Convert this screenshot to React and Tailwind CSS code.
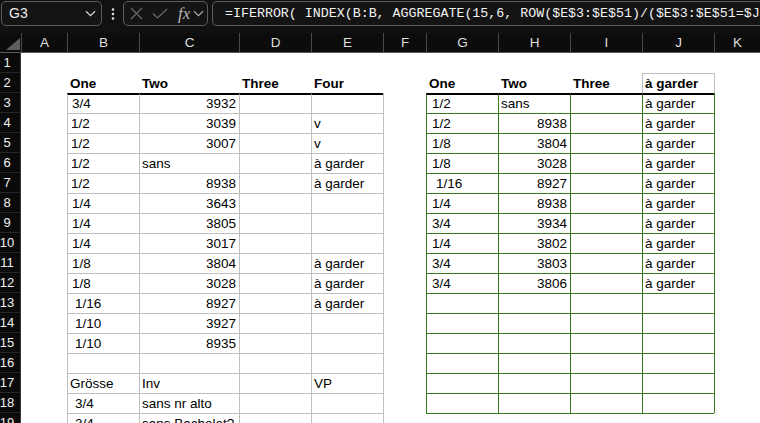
import React from "react";

const GRID =
  "grid grid-cols-[21px_46px_72px_100px_72px_72px_43px_72px_72px_72px_72px_46px]";
const COLS = ["A", "B", "C", "D", "E", "F", "G", "H", "I", "J", "K"];

const NUM = "justify-end pr-[3px]";
const HB = "pl-[3px] font-bold";
const P2 = "pl-[2px]";
const P3 = "pl-[3px]";
const P4 = "pl-[4px]";
const P5 = "pl-[5px]";
const P7 = "pl-[7px]";
const P9 = "pl-[9px]";

const t = (text, c) => ({ text, c });

// data[row][colIndex 1..11]
const data = {
  2: { 2: t("One", HB), 3: t("Two", HB), 4: t("Three", HB), 5: t("Four", HB), 7: t("One", HB), 8: t("Two", HB), 9: t("Three", HB), 10: t("à garder", "pl-[2px] font-bold") },
  3: { 2: t("3/4", P4), 3: t("3932", NUM), 7: t("1/2", P5), 8: t("sans", P2), 10: t("à garder", P2) },
  4: { 2: t("1/2", P3), 3: t("3039", NUM), 5: t("v", P2), 7: t("1/2", P5), 8: t("8938", NUM), 10: t("à garder", P2) },
  5: { 2: t("1/2", P3), 3: t("3007", NUM), 5: t("v", P2), 7: t("1/8", P5), 8: t("3804", NUM), 10: t("à garder", P2) },
  6: { 2: t("1/2", P3), 3: t("sans", P2), 5: t("à garder", P2), 7: t("1/8", P5), 8: t("3028", NUM), 10: t("à garder", P2) },
  7: { 2: t("1/2", P3), 3: t("8938", NUM), 5: t("à garder", P2), 7: t("1/16", P9), 8: t("8927", NUM), 10: t("à garder", P2) },
  8: { 2: t("1/4", P4), 3: t("3643", NUM), 7: t("1/4", P5), 8: t("8938", NUM), 10: t("à garder", P2) },
  9: { 2: t("1/4", P4), 3: t("3805", NUM), 7: t("3/4", P5), 8: t("3934", NUM), 10: t("à garder", P2) },
  10: { 2: t("1/4", P4), 3: t("3017", NUM), 7: t("1/4", P5), 8: t("3802", NUM), 10: t("à garder", P2) },
  11: { 2: t("1/8", P4), 3: t("3804", NUM), 5: t("à garder", P2), 7: t("3/4", P5), 8: t("3803", NUM), 10: t("à garder", P2) },
  12: { 2: t("1/8", P4), 3: t("3028", NUM), 5: t("à garder", P2), 7: t("3/4", P5), 8: t("3806", NUM), 10: t("à garder", P2) },
  13: { 2: t("1/16", P7), 3: t("8927", NUM), 5: t("à garder", P2) },
  14: { 2: t("1/10", P7), 3: t("3927", NUM) },
  15: { 2: t("1/10", P7), 3: t("8935", NUM) },
  16: {},
  17: { 2: t("Grösse", P2), 3: t("Inv", P2), 5: t("VP", P2) },
  18: { 2: t("3/4", P7), 3: t("sans nr alto", P2) },
  19: { 2: t("3/4", P7), 3: t("sans Bachelet?", P2) },
};

function borderFor(r, c) {
  if (r >= 3 && r <= 19 && c >= 2 && c <= 5)
    return r === 3
      ? "border-t-2 border-t-black border-l border-l-[#bfbfbf]"
      : "border-t border-l border-[#bfbfbf]";
  if (r >= 3 && r <= 19 && c === 6) return "border-l border-[#bfbfbf]";
  if (r >= 3 && r <= 18 && c >= 7 && c <= 10)
    return r === 3
      ? "border-t-2 border-t-black border-l border-l-[#3a7a1f]"
      : "border-t border-l border-[#3a7a1f]";
  if (r >= 3 && r <= 18 && c === 11) return "border-l border-[#3a7a1f]";
  if (r === 19 && c >= 7 && c <= 10) return "border-t border-[#3a7a1f]";
  if (r === 2 && c === 10) return "border-t border-l border-[#bfbfbf]";
  if (r === 2 && c === 11) return "border-l border-[#bfbfbf]";
  return "";
}

function Chevron({ color }) {
  return (
    <svg width="11" height="7" viewBox="0 0 11 7">
      <path d="M1 1.2 L5.5 5.6 L10 1.2" stroke={color} strokeWidth="1.2" fill="none" />
    </svg>
  );
}

function Toolbar() {
  return (
    <div className="h-[33px] bg-[#111111] flex items-start pt-[1px] pl-[1px]">
      <div className="w-[101px] h-[25px] shrink-0 rounded-[5px] border border-[#5c5c5c] bg-[#141414] flex items-center justify-between pl-[7px] pr-[5px]">
        <span className="text-[14px] text-[#ececec]">G3</span>
        <Chevron color="#d8d8d8" />
      </div>
      <div className="w-[21px] h-[25px] shrink-0 flex items-center justify-center">
        <svg width="4" height="14" viewBox="0 0 4 14">
          <circle cx="2" cy="2.5" r="1.3" fill="#e0e0e0" />
          <circle cx="2" cy="7" r="1.3" fill="#e0e0e0" />
          <circle cx="2" cy="11.5" r="1.3" fill="#e0e0e0" />
        </svg>
      </div>
      <div className="w-[85px] h-[25px] shrink-0 rounded-[5px] border border-[#5c5c5c] bg-[#141414] flex items-center pl-[6px]">
        <svg width="13" height="13" viewBox="0 0 13 13">
          <path d="M1 1 L12 12 M12 1 L1 12" stroke="#6a6a6a" strokeWidth="1.2" fill="none" />
        </svg>
        <svg width="16" height="11" viewBox="0 0 16 11" className="ml-[9px]">
          <path d="M1 5.5 L5.5 10 L15 1" stroke="#6a6a6a" strokeWidth="1.2" fill="none" />
        </svg>
        <span className="ml-[10px] font-['Liberation_Serif',serif] italic text-[17px] leading-none text-[#b4b4b4]">
          fx
        </span>
        <span className="ml-[3px]">
          <Chevron color="#a8a8a8" />
        </span>
      </div>
      <div className="ml-[4px] flex-1 min-w-0 h-[25px] rounded-l-[5px] border border-r-0 border-[#5c5c5c] bg-[#141414] flex items-center pl-[12px] overflow-hidden">
        <span className="font-['Liberation_Mono',monospace] text-[13.3px] text-[#f2f2f2] whitespace-pre">
          =IFERROR( INDEX(B:B, AGGREGATE(15,6, ROW($E$3:$E$51)/($E$3:$E$51=$J$2), ROWS($1:1))), "")
        </span>
      </div>
    </div>
  );
}

function ColumnHeader() {
  return (
    <div className={`${GRID} h-[20px] bg-[#0c0c0c] border-b border-[#5a5a5a]`}>
      <div className="relative">
        <svg width="16" height="13" viewBox="0 0 16 13" className="absolute left-[5px] top-[5px]">
          <path d="M15 0 L15 12 L1 12 Z" fill="#5e5e5e" />
        </svg>
      </div>
      {COLS.map((c) => (
        <div
          key={c}
          className="border-l border-[#4a4a4a] flex items-center justify-center text-[13.5px] text-[#dedede]"
        >
          {c}
        </div>
      ))}
    </div>
  );
}

function Sheet() {
  const rows = [];
  for (let r = 1; r <= 19; r++) {
    const rowData = data[r] || {};
    rows.push(
      <div key={"h" + r} className="h-[20px] bg-[#0a0a0a] border-b border-[#262626] border-r border-r-[#3a3a3a] flex items-center justify-center pr-[6px] pt-[1px] text-[13px] text-[#f0f0f0]">
        {r}
      </div>
    );
    for (let c = 1; c <= 11; c++) {
      const d = rowData[c];
      rows.push(
        <div
          key={r + "-" + c}
          className={`h-[20px] flex items-end overflow-hidden whitespace-nowrap text-[13.5px] leading-[18px] text-black ${borderFor(r, c)} ${d ? d.c : ""}`}
        >
          {d ? d.text : ""}
        </div>
      );
    }
  }
  return <div className={`${GRID} bg-white`}>{rows}</div>;
}

export default function App() {
  return (
    <div className="w-[760px] h-[423px] overflow-hidden bg-white font-['Liberation_Sans',Arial,sans-serif]">
      <Toolbar />
      <ColumnHeader />
      <Sheet />
    </div>
  );
}
